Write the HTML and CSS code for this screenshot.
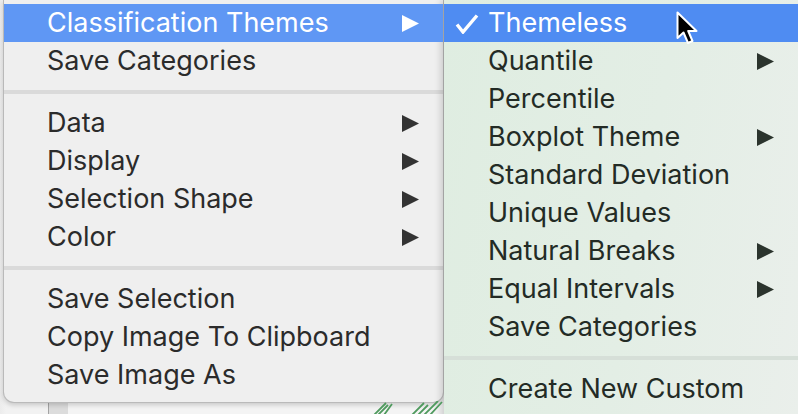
FILE: index.html
```html
<!DOCTYPE html>
<html>
<head>
<meta charset="utf-8">
<link rel="stylesheet" href="styles.css">
</head>
<body>
<div class="desktop">
  <div class="menu main">
    <div class="item active"><span class="label">Classification Themes</span><svg class="arrow" viewBox="0 0 17 17"><polygon points="0,0 17,8.5 0,17"/></svg></div>
    <div class="item"><span class="label">Save Categories</span></div>
    <div class="sep"></div>
    <div class="item"><span class="label">Data</span><svg class="arrow" viewBox="0 0 17 17"><polygon points="0,0 17,8.5 0,17"/></svg></div>
    <div class="item"><span class="label">Display</span><svg class="arrow" viewBox="0 0 17 17"><polygon points="0,0 17,8.5 0,17"/></svg></div>
    <div class="item"><span class="label">Selection Shape</span><svg class="arrow" viewBox="0 0 17 17"><polygon points="0,0 17,8.5 0,17"/></svg></div>
    <div class="item"><span class="label">Color</span><svg class="arrow" viewBox="0 0 17 17"><polygon points="0,0 17,8.5 0,17"/></svg></div>
    <div class="sep"></div>
    <div class="item"><span class="label">Save Selection</span></div>
    <div class="item"><span class="label">Copy Image To Clipboard</span></div>
    <div class="item"><span class="label">Save Image As</span></div>
  </div>
  <div class="menu sub">
    <div class="item active"><svg class="check" viewBox="0 0 24 20"><polyline points="2,10.5 8,18 22,1.5"/></svg><span class="label">Themeless</span></div>
    <div class="item"><span class="label">Quantile</span><svg class="arrow" viewBox="0 0 17 17"><polygon points="0,0 17,8.5 0,17"/></svg></div>
    <div class="item"><span class="label">Percentile</span></div>
    <div class="item"><span class="label">Boxplot Theme</span><svg class="arrow" viewBox="0 0 17 17"><polygon points="0,0 17,8.5 0,17"/></svg></div>
    <div class="item"><span class="label">Standard Deviation</span></div>
    <div class="item"><span class="label">Unique Values</span></div>
    <div class="item"><span class="label">Natural Breaks</span><svg class="arrow" viewBox="0 0 17 17"><polygon points="0,0 17,8.5 0,17"/></svg></div>
    <div class="item"><span class="label">Equal Intervals</span><svg class="arrow" viewBox="0 0 17 17"><polygon points="0,0 17,8.5 0,17"/></svg></div>
    <div class="item"><span class="label">Save Categories</span></div>
    <div class="sep"></div>
    <div class="item"><span class="label">Create New Custom</span></div>
  </div>
</div>
<svg class="strokes" viewBox="0 0 80 14">
  <path d="M2,14 L14,2 M6,14 L16,4 M12,14 L20,3 M40,14 L52,2 M46,14 L56,4 M52,14 L66,0 M58,14 L70,1"/>
</svg>
<svg class="cursor" viewBox="0 0 24 36">
  <path d="M1.5,1.5 L1.5,27 L7.5,21.5 L12,32 L16.5,30 L12.2,20 L20.5,20 Z"/>
</svg>
</body>
</html>
```
FILE: styles.css
```css
html, body {
  margin: 0;
  padding: 0;
}
body {
  width: 798px;
  height: 414px;
  overflow: hidden;
  position: relative;
  font-family: "Inter", "Liberation Sans", sans-serif;
  font-size: 27px;
  background: linear-gradient(to right, #ececec 0, #f2f2f2 6px, #f2f2f2 48px, #a3a3a3 48px, #a3a3a3 49px, #dcdcdc 49px, #dcdcdc 68px, #f4f4f4 68px);
}
.desktop {
  display: flex;
  align-items: flex-start;
  padding-left: 3px;
}
.menu {
  box-sizing: border-box;
}
.main {
  width: 443px;
  padding: 4px 0 8px;
  background: #efefef;
  color: #2b2b2b;
  border: 1px solid rgba(0,0,0,0.22);
  border-top: none;
  border-radius: 0 0 11px 11px;
  box-shadow: 0 2px 5px rgba(0,0,0,0.18);
}
.sub {
  width: 354px;
  height: 430px;
  padding: 4px 0 0;
  background: linear-gradient(100deg, #dfede1 0%, #e3eee5 55%, #eaefeb 100%);
  color: #232b25;
  box-shadow: -3px 0 7px rgba(0,0,0,0.16);
  flex-shrink: 0;
}
.item {
  height: 38px;
  display: flex;
  align-items: center;
  position: relative;
  padding-left: 44px;
  padding-right: 24px;
  white-space: nowrap;
}
.main .item {
  padding-left: 43px;
}
.label {
  flex: 1;
  line-height: 38px;
  letter-spacing: 0;
}
.arrow {
  width: 17px;
  height: 17px;
  fill: #333;
}
.sub .arrow {
  fill: #2b342d;
}
.main .active {
  background: #5f97f4;
  color: #fff;
}
.sub .active {
  background: #4f8cf2;
  color: #fff;
}
.active .arrow {
  fill: #fff;
}
.check {
  position: absolute;
  left: 11px;
  top: 10px;
  width: 24px;
  height: 20px;
  fill: none;
  stroke: #fff;
  stroke-width: 3.4;
  stroke-linejoin: miter;
}
.sep {
  height: 4px;
  margin: 10px 0;
  background: #dadada;
}
.sub .sep {
  background: #d6dfd8;
}
.strokes {
  position: absolute;
  left: 372px;
  top: 401px;
  width: 80px;
  height: 14px;
  fill: none;
  stroke: #4f9a5e;
  stroke-width: 1.8;
}
.cursor {
  position: absolute;
  left: 676px;
  top: 11px;
  width: 24px;
  height: 36px;
  fill: #000;
  stroke: #fff;
  stroke-width: 2;
  stroke-linejoin: round;
}
```
